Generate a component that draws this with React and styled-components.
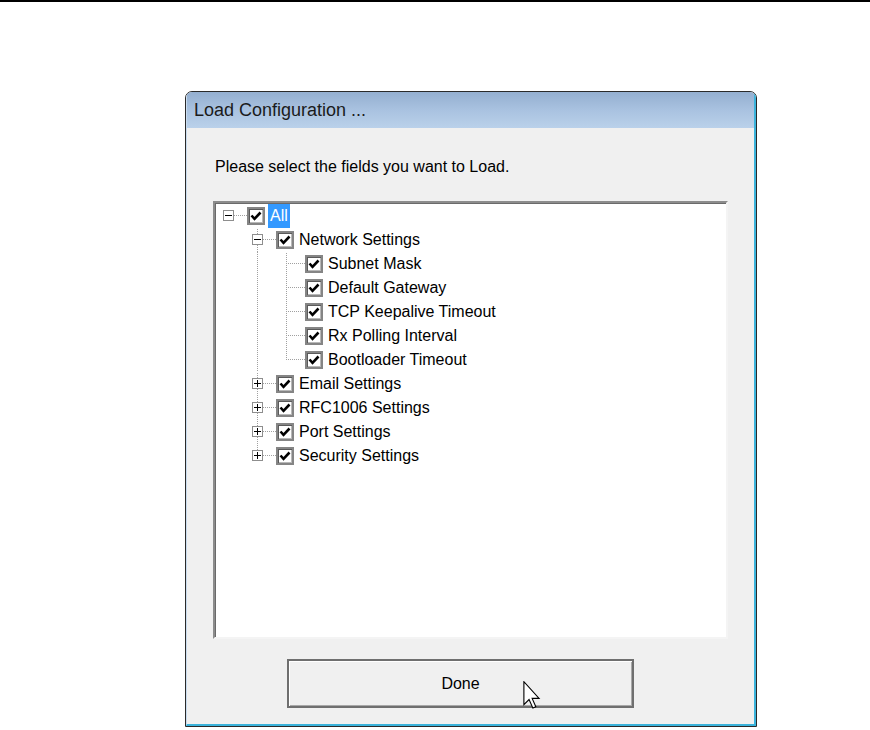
import React from "react";
import styled, { createGlobalStyle } from "styled-components";

const Global = createGlobalStyle`
  html, body { margin: 0; padding: 0; background: #ffffff; }
  body { font-family: "Liberation Sans", Arial, sans-serif; }
`;

const TopRule = styled.div`
  height: 2px;
  background: #000;
`;

const Window = styled.div`
  margin: 89px 0 0 185px;
  width: 570px;
  border: 1px solid #2a2a2a;
  border-radius: 7px 7px 0 0;
  overflow: hidden;
  background: #f0f0f0;
`;

const Frame = styled.div`
  display: flex;
  flex-direction: column;
  border-right: 2px solid #3bb3db;
  border-bottom: 2px solid #3bb3db;
  border-left: 1px solid #c9dcef;
`;

const TitleBar = styled.div`
  height: 36px;
  display: flex;
  align-items: center;
  padding-left: 7px;
  background: linear-gradient(to bottom, #94afd0 0%, #a9c2e0 50%, #bad1ea 100%);
  font-family: "Liberation Sans", Arial, sans-serif;
  font-size: 18px;
  color: #1b1b1b;
`;

const Body = styled.div`
  display: flex;
  flex-direction: column;
  align-items: flex-start;
  padding: 30px 0 16px 26px;
  background: #f0f0f0;
`;

const Prompt = styled.div`
  margin-left: 2px;
  height: 18px;
  line-height: 18px;
  font-size: 16px;
  color: #000;
`;

const TreeBox = styled.div`
  margin-top: 25px;
  padding-top: 1px;
  width: 511px;
  height: 433px;
  background: #fff;
  border-top: 2px solid #8c8c8c;
  border-left: 2px solid #8c8c8c;
  border-right: 2px solid #f4f4f4;
  border-bottom: 2px solid #f4f4f4;
  box-shadow: inset 1px 1px 0 #6a6a6a;
  display: flex;
  flex-direction: column;
`;

const Row = styled.div`
  display: flex;
  align-items: center;
  height: 24px;
  padding-left: 8px;
`;

const Cell = styled.svg`
  flex: none;
  display: block;
`;

const Check = styled.span`
  flex: none;
  box-sizing: border-box;
  width: 18px;
  height: 18px;
  border: 2px solid #858585;
  box-shadow: inset 1px 1px 0 #5a5a5a, inset -1px -1px 0 #b8b8b8;
  background: #fff;
  display: flex;
  align-items: center;
  justify-content: center;
`;

const Label = styled.span`
  margin-left: 3px;
  padding: 0 2px;
  height: 24px;
  line-height: 24px;
  font-size: 16px;
  white-space: nowrap;
  color: ${(p) => (p.$selected ? "#fff" : "#000")};
  background: ${(p) => (p.$selected ? "#3399ff" : "transparent")};
`;

const Button = styled.button`
  position: relative;
  margin: 20px 0 0 74px;
  width: 347px;
  height: 49px;
  box-sizing: border-box;
  border: 2px solid #6f6f6f;
  box-shadow: inset 1px 1px 0 #ffffff, inset -1px -1px 0 #a8a8a8;
  background: #f0f0f0;
  font-family: "Liberation Sans", Arial, sans-serif;
  font-size: 16px;
  color: #000;
  padding: 1px 0 0;
`;

const Cursor = styled.svg`
  position: absolute;
  left: 233px;
  top: 20px;
`;

const DOT = "#a0a0a0";

function Guide({ line }) {
  return (
    <Cell width="29" height="24" viewBox="0 0 29 24" shapeRendering="crispEdges">
      {line && (
        <line x1="5.5" y1="0" x2="5.5" y2="24" stroke={DOT} strokeDasharray="1 1" />
      )}
    </Cell>
  );
}

function Connector({ up, down, expander }) {
  return (
    <Cell width="24" height="24" viewBox="0 0 24 24" shapeRendering="crispEdges">
      {up && <line x1="5.5" y1="1" x2="5.5" y2="12" stroke={DOT} strokeDasharray="1 1" />}
      {down && <line x1="5.5" y1="13" x2="5.5" y2="24" stroke={DOT} strokeDasharray="1 1" />}
      <line x1="7" y1="11.5" x2="24" y2="11.5" stroke={DOT} strokeDasharray="1 1" />
      {expander && (
        <g>
          <rect x="0.5" y="6.5" width="10" height="10" fill="#fff" stroke="#8e8e8e" />
          <line x1="2" y1="11.5" x2="9" y2="11.5" stroke="#000" />
          {expander === "+" && <line x1="5.5" y1="8" x2="5.5" y2="15" stroke="#000" />}
        </g>
      )}
    </Cell>
  );
}

function CheckMark() {
  return (
    <svg width="12" height="12" viewBox="0 0 12 12">
      <polyline points="1.5,5.5 4.5,8.8 10.5,2.5" fill="none" stroke="#000" strokeWidth="2.6" />
    </svg>
  );
}

const tree = [
  {
    label: "All",
    selected: true,
    expanded: true,
    children: [
      {
        label: "Network Settings",
        expanded: true,
        children: [
          { label: "Subnet Mask" },
          { label: "Default Gateway" },
          { label: "TCP Keepalive Timeout" },
          { label: "Rx Polling Interval" },
          { label: "Bootloader Timeout" },
        ],
      },
      { label: "Email Settings", children: [{}] },
      { label: "RFC1006 Settings", children: [{}] },
      { label: "Port Settings", children: [{}] },
      { label: "Security Settings", children: [{}] },
    ],
  },
];

function flatten(nodes, depth = 0, guides = [], out = []) {
  nodes.forEach((n, i) => {
    const hasNext = i < nodes.length - 1;
    const hasPrev = i > 0;
    const hasKids = n.children && n.children.length > 0;
    out.push({
      label: n.label,
      selected: n.selected,
      guides,
      up: depth > 0 || hasPrev,
      down: hasNext,
      expander: hasKids ? (n.expanded ? "-" : "+") : null,
    });
    if (hasKids && n.expanded) {
      flatten(n.children, depth + 1, [...guides, hasNext], out);
    }
  });
  return out;
}

export default function App() {
  const rows = flatten(tree);
  return (
    <>
      <Global />
      <TopRule />
      <Window>
        <Frame>
          <TitleBar>Load Configuration ...</TitleBar>
          <Body>
            <Prompt>Please select the fields you want to Load.</Prompt>
            <TreeBox>
              {rows.map((r, i) => (
                <Row key={i}>
                  {r.guides.map((g, j) => (
                    <Guide key={j} line={g} />
                  ))}
                  <Connector up={r.up} down={r.down} expander={r.expander} />
                  <Check>
                    <CheckMark />
                  </Check>
                  <Label $selected={r.selected}>{r.label}</Label>
                </Row>
              ))}
            </TreeBox>
            <Button>
              Done
              <Cursor width="20" height="28" viewBox="0 0 12 19">
                <path
                  d="M0.5 0.5 L0.5 16 L4 12.6 L6.6 18.4 L8.6 17.5 L6.1 11.8 L10.8 11.8 Z"
                  fill="#fff"
                  stroke="#000"
                  strokeWidth="0.75"
                  strokeLinejoin="miter"
                />
              </Cursor>
            </Button>
          </Body>
        </Frame>
      </Window>
    </>
  );
}
